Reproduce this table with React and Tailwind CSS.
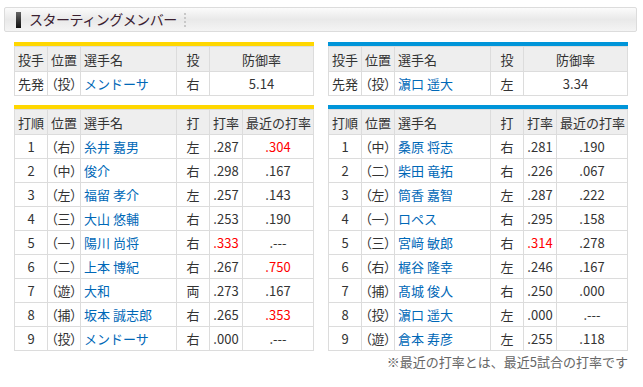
const font = { fontFamily: '"Noto Sans CJK JP", "Liberation Sans", sans-serif' };

const home = {
  bar: "bg-[#ffd700]",
  pitcher: { pos: "（投）", name: "メンドーサ", hand: "右", era: "5.14" },
  lineup: [
    ["1", "（右）", "糸井 嘉男", "左", ".287", ".304", false, true],
    ["2", "（中）", "俊介", "右", ".298", ".167", false, false],
    ["3", "（左）", "福留 孝介", "左", ".257", ".143", false, false],
    ["4", "（三）", "大山 悠輔", "右", ".253", ".190", false, false],
    ["5", "（一）", "陽川 尚将", "右", ".333", ".---", true, false],
    ["6", "（二）", "上本 博紀", "右", ".267", ".750", false, true],
    ["7", "（遊）", "大和", "両", ".273", ".167", false, false],
    ["8", "（捕）", "坂本 誠志郎", "右", ".265", ".353", false, true],
    ["9", "（投）", "メンドーサ", "右", ".000", ".---", false, false],
  ],
};

const away = {
  bar: "bg-[#0095d9]",
  pitcher: { pos: "（投）", name: "濵口 遥大", hand: "左", era: "3.34" },
  lineup: [
    ["1", "（中）", "桑原 将志", "右", ".281", ".190", false, false],
    ["2", "（二）", "柴田 竜拓", "右", ".226", ".067", false, false],
    ["3", "（左）", "筒香 嘉智", "左", ".287", ".222", false, false],
    ["4", "（一）", "ロペス", "右", ".295", ".158", false, false],
    ["5", "（三）", "宮﨑 敏郎", "右", ".314", ".278", true, false],
    ["6", "（右）", "梶谷 隆幸", "左", ".246", ".167", false, false],
    ["7", "（捕）", "髙城 俊人", "右", ".250", ".000", false, false],
    ["8", "（投）", "濵口 遥大", "左", ".000", ".---", false, false],
    ["9", "（遊）", "倉本 寿彦", "左", ".255", ".118", false, false],
  ],
};

const th = "border border-[#dcdcdc] bg-[#eeeeee] font-normal px-[3px] whitespace-nowrap overflow-hidden leading-none";
const td = "border border-[#dcdcdc] px-[3px] whitespace-nowrap overflow-hidden leading-none";
const pos = "[font-feature-settings:'palt'] px-[2px]";
const table = "w-[300px] table-fixed border-collapse text-[13px] text-[#333]";

function PitcherTable({ team }) {
  const p = team.pitcher;
  return (
    <div className="w-[300px]">
      <div className={`h-[4px] ${team.bar}`} />
      <table className={table}>
        <colgroup>
          <col className="w-[33px]" />
          <col className="w-[33px]" />
          <col className="w-[96px]" />
          <col className="w-[33px]" />
          <col />
        </colgroup>
        <thead>
          <tr className="h-[25px]">
            <th className={`${th} text-left`}>投手</th>
            <th className={`${th} text-left`}>位置</th>
            <th className={`${th} text-left`}>選手名</th>
            <th className={`${th} text-center`}>投</th>
            <th className={`${th} text-center`}>防御率</th>
          </tr>
        </thead>
        <tbody>
          <tr className="h-6 bg-white">
            <td className={`${td} text-left`}>先発</td>
            <td className={`${td} ${pos} text-left`}>{p.pos}</td>
            <td className={`${td} text-[#0068b7]`}>{p.name}</td>
            <td className={`${td} text-center`}>{p.hand}</td>
            <td className={`${td} text-center`}>{p.era}</td>
          </tr>
        </tbody>
      </table>
    </div>
  );
}

function LineupTable({ team }) {
  return (
    <div className="w-[300px]">
      <div className={`h-[4px] ${team.bar}`} />
      <table className={table}>
        <colgroup>
          <col className="w-[33px]" />
          <col className="w-[33px]" />
          <col className="w-[96px]" />
          <col className="w-[33px]" />
          <col className="w-[33px]" />
          <col />
        </colgroup>
        <thead>
          <tr className="h-[25px]">
            <th className={`${th} text-left`}>打順</th>
            <th className={`${th} text-left`}>位置</th>
            <th className={`${th} text-left`}>選手名</th>
            <th className={`${th} text-center`}>打</th>
            <th className={`${th} text-center`}>打率</th>
            <th className={`${th} text-center`}>最近の打率</th>
          </tr>
        </thead>
        <tbody>
          {team.lineup.map(([no, p, name, hand, avg, recent, avgRed, recentRed]) => (
            <tr key={no} className="h-6 bg-white">
              <td className={`${td} text-center`}>{no}</td>
              <td className={`${td} ${pos} text-left`}>{p}</td>
              <td className={`${td} text-[#0068b7]`}>{name}</td>
              <td className={`${td} text-center`}>{hand}</td>
              <td className={`${td} text-center ${avgRed ? "text-[#ff0000]" : ""}`}>{avg}</td>
              <td className={`${td} text-center ${recentRed ? "text-[#ff0000]" : ""}`}>{recent}</td>
            </tr>
          ))}
        </tbody>
      </table>
    </div>
  );
}

export default function App() {
  return (
    <div className="w-[643px] h-[387px] bg-white pt-[7px]" style={font}>
      {/* Title bar */}
      <div className="mx-[4px] w-[633px] h-[25px] flex items-center rounded-[2px] border border-[#dcdcdc] bg-gradient-to-b from-[#fbfbfb] via-[#e9e9e9] to-[#f4f4f4]">
        <div className="ml-[11px] w-[5px] h-[16px] bg-gradient-to-b from-[#666] to-[#111]" />
        <span className="ml-[8px] text-[14px] text-[#3a2030] tracking-[-0.5px]">スターティングメンバー</span>
        <span className="ml-[7px] h-[14px] border-l-2 border-dotted border-[#c8c8c8]" />
      </div>

      <div className="mt-[10px] ml-[14px] flex gap-[14px]">
        <PitcherTable team={home} />
        <PitcherTable team={away} />
      </div>

      <div className="mt-[9px] ml-[14px] flex gap-[14px]">
        <LineupTable team={home} />
        <LineupTable team={away} />
      </div>

      <p className="w-[628px] mt-[1px] text-right text-[13px] text-[#666]">
        ※最近の打率とは、最近5試合の打率です
      </p>
    </div>
  );
}
